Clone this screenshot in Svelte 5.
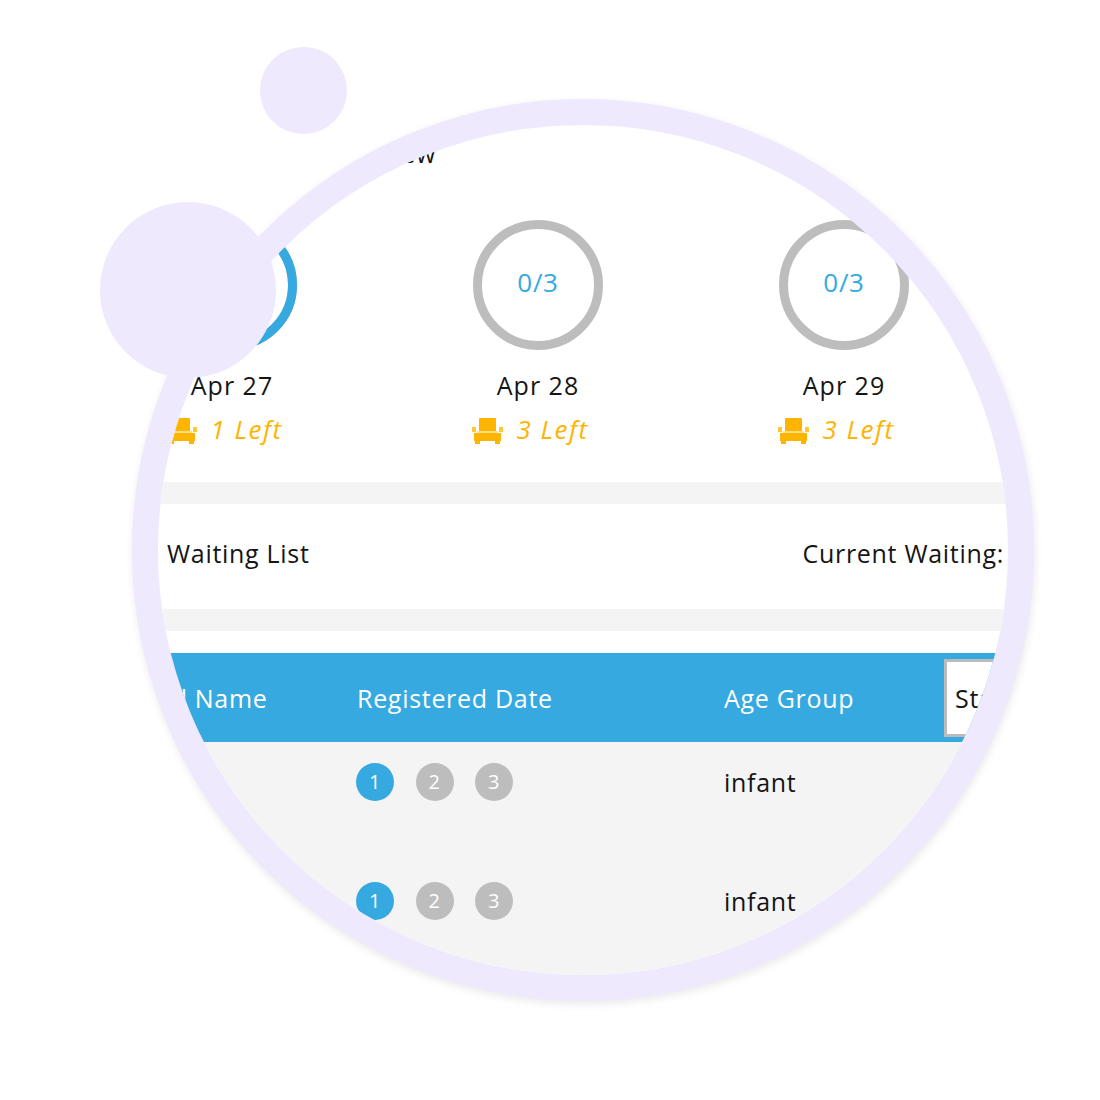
<script>
  const days = [
    { date: "Apr 27", count: "2/3", left: 1, progress: 0.67 },
    { date: "Apr 28", count: "0/3", left: 3, progress: 0 },
    { date: "Apr 29", count: "0/3", left: 3, progress: 0 }
  ];
  const rows = [{ age: "infant" }, { age: "infant" }];
  const circ = 2 * Math.PI * 60.5;
</script>

<div class="stage">
  <div class="lens">
    <div class="page">
      <div class="crumb">Overview</div>

      <div class="days">
        {#each days as day}
          <div class="day">
            <div class="gauge">
              <svg width="130" height="130" viewBox="0 0 130 130">
                <circle cx="65" cy="65" r="60.5" class="track" />
                {#if day.progress > 0}
                  <circle cx="65" cy="65" r="60.5" class="fill" stroke-dasharray="{circ * day.progress} {circ}" transform="rotate(-90 65 65)" />
                {/if}
              </svg>
              <span class="count">{day.count}</span>
            </div>
            <div class="date">{day.date}</div>
            <div class="left">
              <svg class="chair" width="31" height="26" viewBox="0 0 31 26">
                <path fill="#ffb400" d="M7 1q0-1 1-1h15q1 0 1 1v12H7z" />
                <path fill="#ffc83a" d="M0 9h4v5H0zM27 9h4v5h-4z" />
                <path fill="#ffdd80" d="M5 13h21v2H5z" />
                <path fill="#ffb400" d="M2 15h27v8h-1v3h-5v-3H8v3H3v-3H2z" />
              </svg>
              <em>{day.left} Left</em>
            </div>
          </div>
        {/each}
      </div>

      <div class="band"></div>
      <div class="waiting">
        <span>Waiting List</span>
        <span>Current Waiting:</span>
      </div>
      <div class="band"></div>

      <div class="table">
        <div class="head">
          <span class="name">Full Name</span>
          <span>Registered Date</span>
          <span>Age Group</span>
          <div class="select">Status</div>
        </div>
        {#each rows as row}
          <div class="row">
            <span></span>
            <div class="steps">
              <i class="on">1</i><i>2</i><i>3</i>
            </div>
            <span>{row.age}</span>
            <span></span>
          </div>
        {/each}
      </div>
    </div>
  </div>
  <div class="dot small"></div>
  <div class="dot big"></div>
</div>

<style>
  :global(body) {
    background: #fff;
  }
  .stage {
    position: relative;
    width: 1100px;
    height: 1100px;
    padding: 99px 0 0 132px;
    box-sizing: border-box;
    overflow: hidden;
    font-family: "Open Sans", sans-serif;
    font-size: 25px;
    letter-spacing: 0.7px;
    color: #151515;
  }
  .lens {
    width: 902px;
    height: 902px;
    box-sizing: border-box;
    border: 26px solid #eee9fd;
    border-radius: 50%;
    overflow: hidden;
    background: #fff;
    box-shadow: 1px 3px 8px rgba(0, 0, 0, 0.09);
  }
  .page {
    width: 1100px;
    margin-left: -79px;
  }
  .crumb {
    margin-top: 12px;
    padding-left: 243px;
    line-height: 32px;
  }
  .days {
    display: grid;
    grid-template-columns: repeat(3, 306px);
    padding-top: 51px;
    height: 262px;
  }
  .day {
    display: flex;
    flex-direction: column;
    align-items: center;
  }
  .gauge {
    position: relative;
    width: 130px;
    height: 130px;
  }
  .gauge svg {
    display: block;
  }
  .track {
    fill: none;
    stroke: #bdbdbd;
    stroke-width: 9;
  }
  .fill {
    fill: none;
    stroke: #36a9e0;
    stroke-width: 9;
  }
  .count {
    position: absolute;
    inset: 0;
    display: flex;
    align-items: center;
    justify-content: center;
    color: #36a9e0;
    font-size: 26px;
    padding-bottom: 7px;
    box-sizing: border-box;
  }
  .date {
    margin-top: 19px;
    line-height: 32px;
    letter-spacing: 1px;
  }
  .left {
    display: flex;
    align-items: center;
    gap: 13px;
    margin: 13px 15px 0 0;
    height: 30px;
    color: #ffb400;
  }
  .left em {
    font-style: italic;
    font-size: 26px;
    letter-spacing: 1.5px;
  }
  .chair {
    display: block;
    margin-top: 4px;
  }
  .band {
    height: 22px;
    background: #f4f4f4;
  }
  .waiting {
    height: 105px;
    display: flex;
    align-items: center;
    padding: 0 0 7px 88px;
    box-sizing: border-box;
    gap: 493px;
  }
  .table {
    padding-top: 22px;
  }
  .head,
  .row {
    display: grid;
    grid-template-columns: 209px 367px 220px 220px;
    padding-left: 69px;
    align-items: center;
  }
  .head {
    height: 89px;
    background: #36a9e0;
    color: #fff;
  }
  .name {
    margin-left: -4px;
  }
  .select {
    height: 78px;
    box-sizing: border-box;
    border: 3px solid #bbb;
    background: #fff;
    color: #151515;
    display: flex;
    align-items: center;
    padding-left: 8px;
  }
  .row {
    height: 119px;
    background: #f4f4f4;
    padding-bottom: 40px;
    box-sizing: border-box;
  }
  .steps {
    display: flex;
    gap: 21.5px;
    margin-left: -1px;
  }
  .steps i {
    width: 38px;
    height: 38px;
    border-radius: 50%;
    background: #bdbdbd;
    color: #fff;
    font-style: normal;
    font-size: 20px;
    display: flex;
    align-items: center;
    justify-content: center;
  }
  .steps i.on {
    background: #36a9e0;
  }
  .dot {
    position: absolute;
    border-radius: 50%;
    background: #eee9fd;
  }
  .small {
    left: 260px;
    top: 47px;
    width: 87px;
    height: 87px;
  }
  .big {
    left: 100px;
    top: 202px;
    width: 176px;
    height: 176px;
  }
</style>
